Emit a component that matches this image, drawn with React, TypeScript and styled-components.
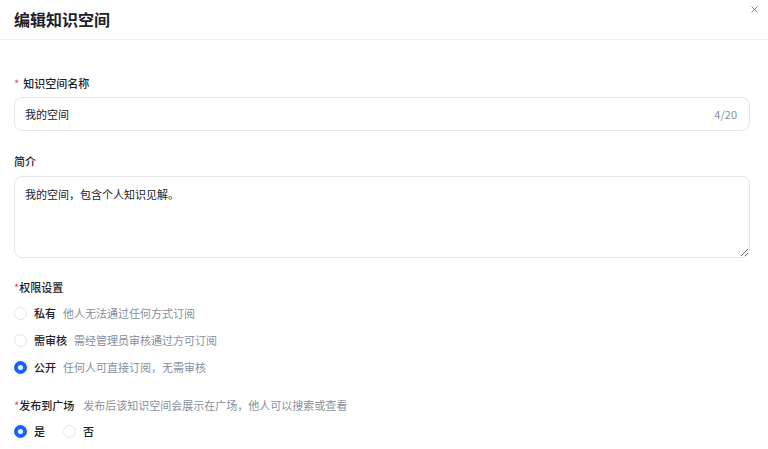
import React, { useState } from "react";
import styled, { createGlobalStyle } from "styled-components";
import { X } from "lucide-react";

const GlobalStyle = createGlobalStyle`
  html, body {
    margin: 0;
    padding: 0;
    background: #fff;
    font-family: "Noto Sans CJK SC", "Noto Sans", sans-serif;
    color: #1d2129;
  }
  * {
    box-sizing: border-box;
  }
`;

const Modal = styled.div`
  width: 768px;
  height: 449px;
  overflow: hidden;
  background: #fff;
`;

const Header = styled.div`
  height: 40px;
  padding: 7px 8px 0 14px;
  border-bottom: 1px solid #eef0f3;
  display: flex;
  justify-content: space-between;
  align-items: flex-start;
`;

const Title = styled.h2`
  margin: 0;
  font-size: 16px;
  line-height: 24px;
  font-weight: 600;
  color: #1d2129;
`;

const CloseButton = styled.button`
  border: 0;
  background: none;
  padding: 0;
  margin-top: -3px;
  color: #4e5969;
  cursor: pointer;
  display: flex;
`;

const Body = styled.div`
  padding: 34px 18px 0 14px;
  display: flex;
  flex-direction: column;
`;

const Field = styled.div<{ $mb?: number }>`
  display: flex;
  flex-direction: column;
  margin-bottom: ${(p) => p.$mb ?? 20}px;
`;

const Label = styled.div<{ $mb?: number }>`
  font-size: 11px;
  line-height: 18px;
  font-weight: 500;
  color: #1d2129;
  margin-bottom: ${(p) => p.$mb ?? 6}px;
  display: flex;
  align-items: center;
`;

const Star = styled.span<{ $space?: boolean }>`
  color: #f53f3f;
  font-weight: 400;
  margin-right: ${(p) => (p.$space ? 4 : 0)}px;
`;

const Hint = styled.span`
  font-weight: 400;
  color: #86909c;
  margin-left: 9px;
`;

const InputBox = styled.div`
  height: 34px;
  border: 1px solid #e5e6eb;
  border-radius: 8px;
  display: flex;
  align-items: center;
  padding: 0 12px 0 10px;
`;

const TextInput = styled.input`
  flex: 1;
  border: 0;
  outline: none;
  font: inherit;
  font-size: 11px;
  color: #1d2129;
  background: transparent;
  padding: 0;
`;

const Counter = styled.span`
  font-size: 11px;
  color: #86909c;
`;

const TextArea = styled.textarea`
  height: 82px;
  border: 1px solid #e5e6eb;
  border-radius: 8px;
  padding: 7px 10px;
  font: inherit;
  font-size: 11px;
  line-height: 20px;
  color: #1d2129;
  outline: none;
  resize: vertical;
`;

const RadioGroup = styled.div<{ $row?: boolean }>`
  display: flex;
  flex-direction: ${(p) => (p.$row ? "row" : "column")};
  gap: ${(p) => (p.$row ? "18px" : "9px")};
`;

const RadioItem = styled.label`
  display: flex;
  align-items: center;
  height: 18px;
  font-size: 11px;
  cursor: pointer;
`;

const Dot = styled.span<{ $checked?: boolean }>`
  width: 13px;
  height: 13px;
  border-radius: 50%;
  background: #fff;
  border: ${(p) => (p.$checked ? "4px solid #1664ff" : "1px solid #e5e6eb")};
  margin-right: 7px;
  flex-shrink: 0;
`;

const RadioText = styled.span`
  font-weight: 500;
  color: #1d2129;
`;

const RadioDesc = styled.span`
  color: #86909c;
  margin-left: 7px;
`;

const permissions = [
  { key: "private", name: "私有", desc: "他人无法通过任何方式订阅" },
  { key: "review", name: "需审核", desc: "需经管理员审核通过方可订阅" },
  { key: "public", name: "公开", desc: "任何人可直接订阅，无需审核" },
];

export default function App() {
  const [name, setName] = useState("我的空间");
  const [desc, setDesc] = useState("我的空间，包含个人知识见解。");
  const [perm, setPerm] = useState("public");
  const [publish, setPublish] = useState(true);

  return (
    <Modal>
      <GlobalStyle />
      <Header>
        <Title>编辑知识空间</Title>
        <CloseButton aria-label="关闭">
          <X size={11} strokeWidth={1.6} />
        </CloseButton>
      </Header>
      <Body>
        <Field $mb={21}>
          <Label $mb={5}>
            <Star $space>*</Star>知识空间名称
          </Label>
          <InputBox>
            <TextInput value={name} maxLength={20} onChange={(e) => setName(e.target.value)} />
            <Counter>{name.length}/20</Counter>
          </InputBox>
        </Field>
        <Field>
          <Label>简介</Label>
          <TextArea value={desc} onChange={(e) => setDesc(e.target.value)} />
        </Field>
        <Field>
          <Label $mb={8}>
            <Star>*</Star>权限设置
          </Label>
          <RadioGroup>
            {permissions.map((p) => (
              <RadioItem key={p.key} onClick={() => setPerm(p.key)}>
                <Dot $checked={perm === p.key} />
                <RadioText>{p.name}</RadioText>
                <RadioDesc>{p.desc}</RadioDesc>
              </RadioItem>
            ))}
          </RadioGroup>
        </Field>
        <Field>
          <Label $mb={8}>
            <Star>*</Star>发布到广场
            <Hint>发布后该知识空间会展示在广场，他人可以搜索或查看</Hint>
          </Label>
          <RadioGroup $row>
            <RadioItem onClick={() => setPublish(true)}>
              <Dot $checked={publish} />
              <RadioText>是</RadioText>
            </RadioItem>
            <RadioItem onClick={() => setPublish(false)}>
              <Dot $checked={!publish} />
              <RadioText>否</RadioText>
            </RadioItem>
          </RadioGroup>
        </Field>
      </Body>
    </Modal>
  );
}
